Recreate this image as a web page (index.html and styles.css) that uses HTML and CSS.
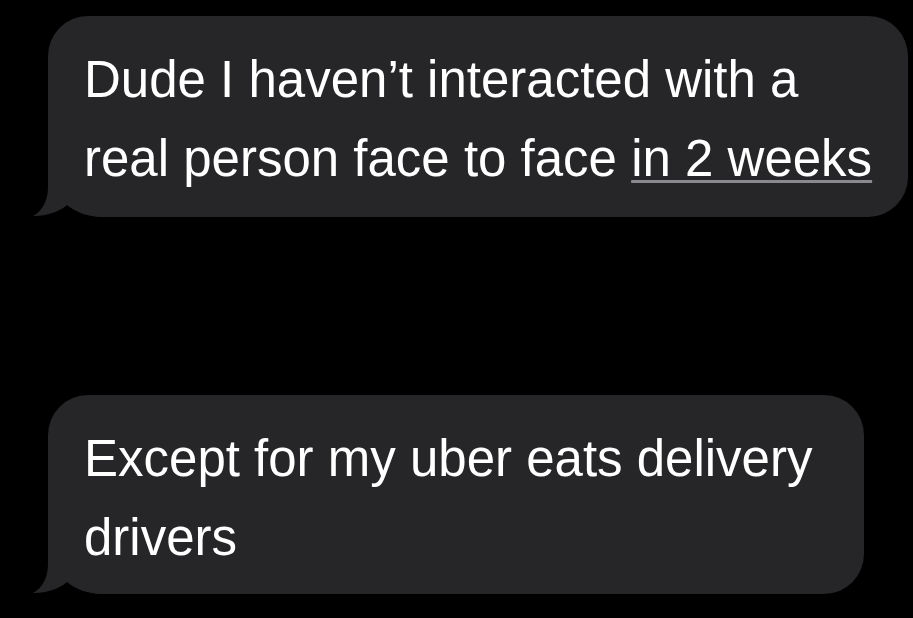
FILE: index.html
```html
<!DOCTYPE html>
<html lang="en">
<head>
<meta charset="utf-8">
<title>Messages</title>
<link rel="stylesheet" href="styles.css">
</head>
<body>
<main class="thread">
  <div class="bubble bubble--first">
    <svg class="bubble__tail" width="70" height="70" viewBox="0 0 70 70" aria-hidden="true"><path d="M15 0 L15 40 C15 52 10 64 0 69 C12 69.5 26 65 34 58 C42 65 55 70 70 70 L70 0 Z"/></svg>
    <p class="bubble__text">Dude I haven’t interacted with a<br>real person face to face <span class="bubble__link">in 2 weeks</span></p>
  </div>
  <div class="bubble bubble--second">
    <svg class="bubble__tail" width="70" height="70" viewBox="0 0 70 70" aria-hidden="true"><path d="M15 0 L15 40 C15 52 10 64 0 69 C12 69.5 26 65 34 58 C42 65 55 70 70 70 L70 0 Z"/></svg>
    <p class="bubble__text">Except for my uber eats delivery<br>drivers</p>
  </div>
</main>
</body>
</html>
```

FILE: styles.css
```css
* { box-sizing: border-box; }

html, body {
  margin: 0;
  background: #000;
}

body {
  width: 913px;
  height: 618px;
  overflow: hidden;
  font-family: "Liberation Sans", Arial, sans-serif;
  color: #fff;
}

.thread {
  display: flex;
  flex-direction: column;
  align-items: flex-start;
  gap: 178px;
  padding: 16px 0 0 48px;
}

.bubble {
  position: relative;
  background: #262629;
  border-radius: 40px;
  border-bottom-left-radius: 55px;
  padding: 24px 0 18px 36px;
  height: 201px;
}

.bubble--first { width: 860px; }
.bubble--second { width: 816px; height: 199px; }

.bubble__text {
  position: relative;
  margin: 0;
  font-size: 51px;
  line-height: 79px;
  white-space: nowrap;
}

.bubble__link {
  text-decoration: underline;
  text-decoration-color: #8a8a8e;
  text-decoration-thickness: 3px;
  text-underline-offset: 4px;
}

.bubble__tail {
  position: absolute;
  left: -15px;
  bottom: 0;
  fill: #262629;
}
```
